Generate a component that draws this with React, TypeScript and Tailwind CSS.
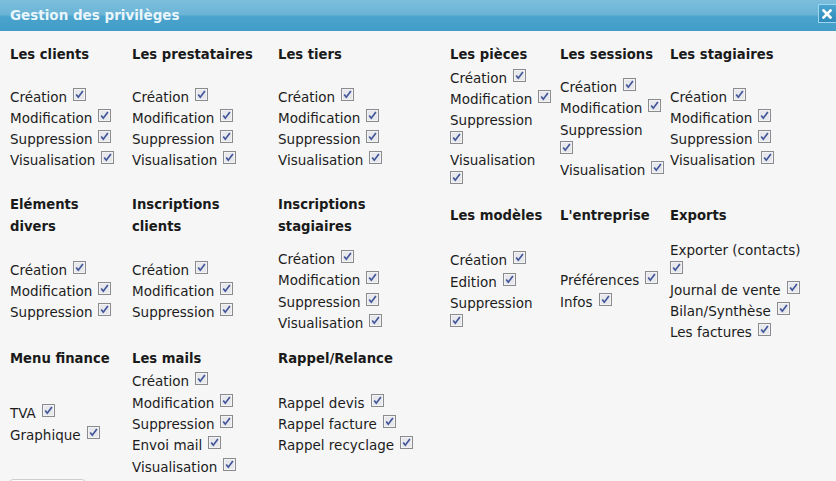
import React from "react";

type Item = { label: string; wrap?: boolean };
type Group = { title: React.ReactNode; items: Item[] } | null;

function Cb({ inline = true }: { inline?: boolean }) {
  return (
    <svg
      width="13"
      height="13"
      viewBox="0 0 13 13"
      className={inline ? "inline-block align-baseline mb-[1px] ml-[6px]" : "inline-block align-baseline mb-[1px]"}
    >
      <rect x="0.5" y="0.5" width="12" height="12" fill="#dcdde1" stroke="#8a8b8d" />
      <rect x="1.5" y="1.5" width="10" height="10" fill="#e7e8ec" stroke="#f3f3f5" />
      <path d="M3.2 6.4 L5.3 9.2 L9.9 3.1" fill="none" stroke="#42559a" strokeWidth="1.7" />
    </svg>
  );
}

function ItemRow({ item }: { item: Item }) {
  if (item.wrap) {
    return (
      <div className="leading-[20px]">
        <div className="whitespace-nowrap">{item.label}</div>
        <div>
          <Cb inline={false} />
        </div>
      </div>
    );
  }
  return (
    <div className="whitespace-nowrap leading-[21.33px]">
      {item.label}
      <Cb />
    </div>
  );
}

const n = (l: string): Item => ({ label: l });
const w = (l: string): Item => ({ label: l, wrap: true });
const std = [n("Création"), n("Modification"), n("Suppression"), n("Visualisation")];

const rows: Group[][] = [
  [
    { title: "Les clients", items: std },
    { title: "Les prestataires", items: std },
    { title: "Les tiers", items: std },
    { title: "Les pièces", items: [n("Création"), n("Modification"), w("Suppression"), w("Visualisation")] },
    { title: "Les sessions", items: [n("Création"), n("Modification"), w("Suppression"), n("Visualisation")] },
    { title: "Les stagiaires", items: std },
  ],
  [
    { title: <>Eléments<br />divers</>, items: [n("Création"), n("Modification"), n("Suppression")] },
    { title: <>Inscriptions<br />clients</>, items: [n("Création"), n("Modification"), n("Suppression")] },
    { title: <>Inscriptions<br />stagiaires</>, items: std },
    { title: "Les modèles", items: [n("Création"), n("Edition"), w("Suppression")] },
    { title: "L'entreprise", items: [n("Préférences"), n("Infos")] },
    {
      title: "Exports",
      items: [w("Exporter (contacts)"), n("Journal de vente"), n("Bilan/Synthèse"), n("Les factures")],
    },
  ],
  [
    { title: "Menu finance", items: [n("TVA"), n("Graphique")] },
    {
      title: "Les mails",
      items: [n("Création"), n("Modification"), n("Suppression"), n("Envoi mail"), n("Visualisation")],
    },
    { title: "Rappel/Relance", items: [n("Rappel devis"), n("Rappel facture"), n("Rappel recyclage")] },
    null,
    null,
    null,
  ],
];

export default function App() {
  return (
    <div
      className="w-[836px] h-[481px] overflow-hidden bg-[#f6f6f6] text-[#1c1c1c] text-[13.5px]"
      style={{ fontFamily: '"DejaVu Sans", Verdana, sans-serif' }}
    >
      <div className="h-[31px] flex items-start justify-between bg-[linear-gradient(to_bottom,#7cbedc_0%,#6cb4d6_46%,#4aa3cc_54%,#419dc8_100%)]">
        <div className="pl-[10px] leading-[31px] text-[13.5px] font-bold text-[#e9f6fc]">Gestion des privilèges</div>
        <div className="mt-[4px] -mr-[2px] w-[20px] h-[19px] border border-[#9fd6ef] bg-[linear-gradient(to_bottom,#4aa4cf_0%,#3b97c4_50%,#2f8bbb_100%)] flex items-center justify-center pr-[2px]">
          <svg width="10" height="10" viewBox="0 0 10 10">
            <path d="M1.5 1.5 L8.5 8.5 M8.5 1.5 L1.5 8.5" stroke="#ffffff" strokeWidth="2.6" strokeLinecap="square" />
          </svg>
        </div>
      </div>
      <div className="pl-[10px] pt-[13px] flex flex-col">
        {rows.map((row, ri) => (
          <div key={ri} className={ri === 0 ? "flex flex-col" : "flex flex-col mt-[4px]"}>
            <div className="grid grid-cols-[122px_146px_172px_110px_110px_166px] items-center">
              {row.map((g, gi) => (
                <div key={gi} className="font-bold text-[13.2px] leading-[21.33px] text-[#1a1a1a]">
                  {g ? g.title : null}
                </div>
              ))}
            </div>
            <div className="grid grid-cols-[122px_146px_172px_110px_110px_166px] items-center mt-[2.5px]">
              {row.map((g, gi) => (
                <div key={gi} className="flex flex-col">
                  {g ? g.items.map((it, ii) => <ItemRow key={ii} item={it} />) : null}
                </div>
              ))}
            </div>
          </div>
        ))}
        <div className="mt-[1px] w-[77px] h-[24px] rounded-t-[4px] border border-[#cfcfcf] bg-[#fbfbfb] -ml-[1px]" />
      </div>
    </div>
  );
}
